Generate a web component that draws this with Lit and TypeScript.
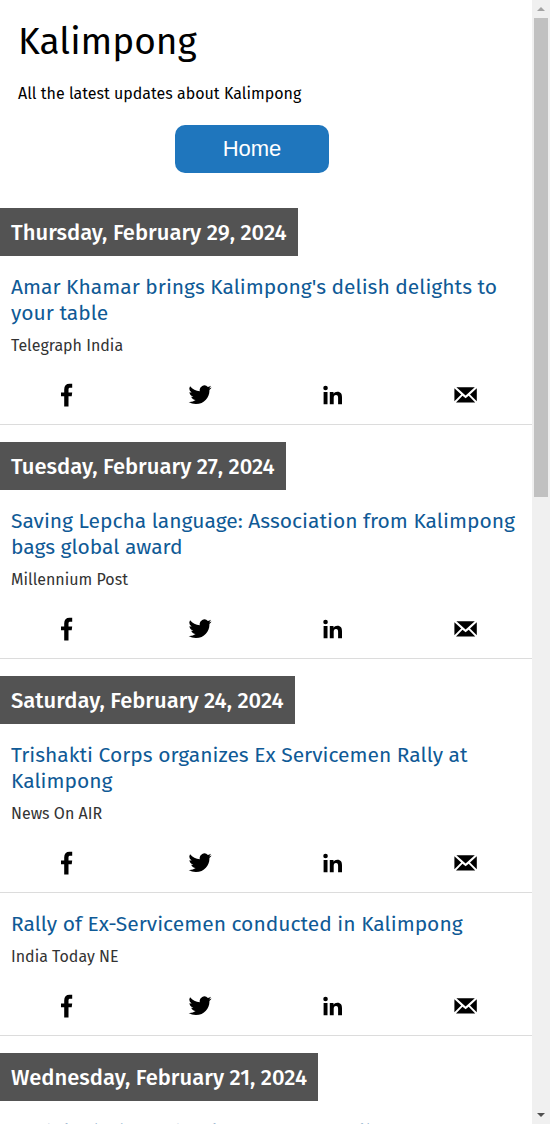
import { LitElement, html, css, svg } from "lit";
import { customElement, property } from "lit/decorators.js";

interface Story {
  title: string;
  source: string;
}

interface Day {
  date: string;
  stories: Story[];
}

const days: Day[] = [
  {
    date: "Thursday, February 29, 2024",
    stories: [
      { title: "Amar Khamar brings Kalimpong's delish delights to your table", source: "Telegraph India" },
    ],
  },
  {
    date: "Tuesday, February 27, 2024",
    stories: [
      { title: "Saving Lepcha language: Association from Kalimpong bags global award", source: "Millennium Post" },
    ],
  },
  {
    date: "Saturday, February 24, 2024",
    stories: [
      { title: "Trishakti Corps organizes Ex Servicemen Rally at Kalimpong", source: "News On AIR" },
      { title: "Rally of Ex-Servicemen conducted in Kalimpong", source: "India Today NE" },
    ],
  },
  {
    date: "Wednesday, February 21, 2024",
    stories: [{ title: "Model mission school opens near Kalimpong", source: "Times Now" }],
  },
];

const shareLinks = [
  {
    label: "Share on Facebook",
    icon: svg`<path d="M9.200 23.500V13.200H6V9.400h3.200V6.400C9.200 2.700 11 .8 14.600.8h2.600v3.900h-1.900c-1.400 0-1.800.6-1.800 1.900v2.800h3.700l-.5 3.800h-3.200v10.300z"/>`,
  },
  {
    label: "Share on Twitter",
    icon: svg`<path d="M23.600 4.600c-.9.400-1.800.6-2.700.8 1-.6 1.700-1.500 2-2.600-.9.500-1.900.9-3 1.100a4.750 4.750 0 0 0-8.100 4.300C7.900 8 4.400 6.100 2.100 3.200a4.750 4.750 0 0 0 1.500 6.300c-.8 0-1.500-.2-2.100-.6 0 2.300 1.600 4.300 3.800 4.700-.7.200-1.400.2-2.100.1.600 1.900 2.400 3.200 4.400 3.300a9.500 9.500 0 0 1-7 2 13.400 13.400 0 0 0 7.300 2.100c8.900 0 13.900-7.500 13.500-14.100.9-.7 1.700-1.500 2.200-2.400z"/>`,
  },
  {
    label: "Share on LinkedIn",
    icon: svg`<path d="M2.600 9h3.900v12.200H2.600zM8.800 9h3.700v1.700c.8-1.300 2-2 3.800-2 3.600 0 4.700 2.200 4.700 5.700v6.800h-3.900V15c0-2-.5-3.100-2.100-3.100-1.700 0-2.300 1.200-2.300 3.100v6.200H8.800z"/><circle cx="4.550" cy="5" r="2.300"/>`,
  },
  {
    label: "Share by email",
    icon: svg`<path d="M2.400 4.200h18.400L11.600 12.600zM.4 5.200l6.800 6.400-6.800 6.600zM22.800 5.200v13l-6.800-6.600zM8.500 12.700l3.100 2.500 3.100-2.500 6.500 6.700H2z"/>`,
  },
];

@customElement("news-story")
export class NewsStory extends LitElement {
  @property({ attribute: false }) story!: Story;

  static styles = css`
    :host {
      display: block;
      border-bottom: 1px solid #dcdcdc;
    }
    .title {
      margin: 0;
      padding: 18px 0 0 11px;
      font-size: 21px;
      font-weight: 400;
      line-height: 26px;
    }
    .title a {
      color: #0f5a96;
      text-decoration: none;
    }
    .source {
      margin: 0;
      padding: 8px 11px;
      font-size: 16px;
      line-height: 24px;
      color: #333;
    }
    .share {
      display: grid;
      grid-template-columns: repeat(4, 1fr);
      padding: 11px 0;
    }
    .share a {
      display: flex;
      justify-content: center;
      padding: 6px 0;
      color: #000;
    }
    svg {
      width: 24px;
      height: 24px;
      fill: currentColor;
    }
  `;

  render() {
    return html`
      <h3 class="title"><a href="#">${this.story.title}</a></h3>
      <p class="source">${this.story.source}</p>
      <nav class="share">
        ${shareLinks.map(
          (s) => html`<a href="#" aria-label=${s.label}><svg viewBox="0 0 24 24" aria-hidden="true">${s.icon}</svg></a>`
        )}
      </nav>
    `;
  }
}

@customElement("app-root")
export class AppRoot extends LitElement {
  static styles = css`
    :host {
      display: grid;
      grid-template-columns: minmax(0, 1fr) 18px;
      height: 100vh;
      background: #fff;
      color: #000;
      font-family: "Trebuchet MS", "Fira Sans", "Noto Sans", sans-serif;
    }
    .page {
      overflow: hidden;
    }
    .intro {
      padding: 17px 18px 0;
    }
    h1 {
      margin: 0;
      font-size: 37px;
      font-weight: 400;
      line-height: 50px;
    }
    .intro p {
      margin: 15px 0 19px;
      font-size: 16px;
      line-height: 24px;
    }
    .home {
      display: block;
      width: 154px;
      height: 48px;
      margin: 0 auto;
      border: 0;
      border-radius: 10px;
      background: #1f76bd;
      color: #fff;
      font-family: "Liberation Sans", Arial, sans-serif;
      font-size: 22px;
    }
    .actions {
      padding: 0 28px 18px 0;
    }
    .day {
      padding-top: 17px;
    }
    .date {
      width: fit-content;
      margin: 0;
      padding: 2px 11px 0;
      background: #535353;
      color: #fff;
      font-size: 22px;
      font-weight: 500;
      line-height: 46px;
    }
    .rail {
      display: flex;
      flex-direction: column;
      background: #f0f0f0;
    }
    .rail button {
      display: flex;
      align-items: center;
      justify-content: center;
      height: 18px;
      padding: 0;
      border: 0;
      background: none;
      color: #505050;
    }
    .rail button.up {
      color: #a3a3a3;
    }
    .rail svg {
      width: 8px;
      height: 4px;
      fill: currentColor;
    }
    .track {
      flex: 1;
      padding: 0 2px;
    }
    .thumb {
      height: 44%;
      background: #c1c1c1;
    }
  `;

  render() {
    return html`
      <main class="page">
        <header class="intro">
          <h1>Kalimpong</h1>
          <p>All the latest updates about Kalimpong</p>
        </header>
        <div class="actions"><button class="home" type="button">Home</button></div>
        ${days.map(
          (day) => html`
            <section class="day">
              <h2 class="date">${day.date}</h2>
              ${day.stories.map((story) => html`<news-story .story=${story}></news-story>`)}
            </section>
          `
        )}
      </main>
      <div class="rail">
        <button class="up" type="button" aria-label="Scroll up"><svg viewBox="0 0 8 4"><path d="M0 4 4 0l4 4z" /></svg></button>
        <div class="track"><div class="thumb"></div></div>
        <button type="button" aria-label="Scroll down"><svg viewBox="0 0 8 4"><path d="M0 0h8L4 4z" /></svg></button>
      </div>
    `;
  }
}
